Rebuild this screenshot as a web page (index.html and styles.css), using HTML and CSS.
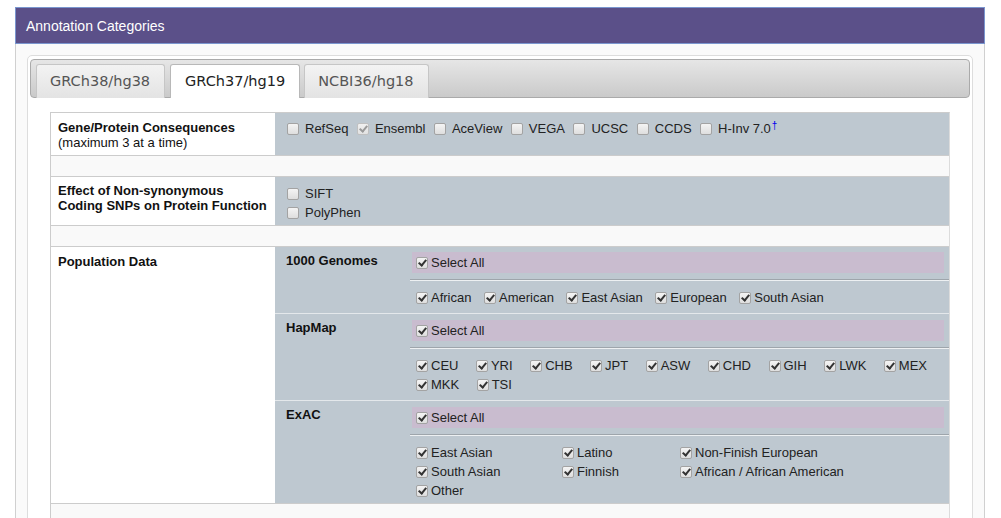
FILE: index.html
```html
<!DOCTYPE html>
<html>
<head>
<meta charset="utf-8">
<link rel="stylesheet" href="styles.css">
</head>
<body>
<div class="panel">
  <div class="panel-head">Annotation Categories</div>
  <div class="panel-body">
    <div class="widget">
      <div class="tabbar">
        <div class="tab">GRCh38/hg38</div>
        <div class="tab active">GRCh37/hg19</div>
        <div class="tab">NCBI36/hg18</div>
      </div>
      <div class="content">
        <div class="grid">
          <div class="row">
            <div class="label"><b>Gene/Protein Consequences</b><br>(maximum 3 at a time)</div>
            <div class="value inline">
              <span class="item"><span class="cb"></span>RefSeq</span>
              <span class="item"><span class="cb checked disabled"></span>Ensembl</span>
              <span class="item"><span class="cb"></span>AceView</span>
              <span class="item"><span class="cb"></span>VEGA</span>
              <span class="item"><span class="cb"></span>UCSC</span>
              <span class="item"><span class="cb"></span>CCDS</span>
              <span class="item"><span class="cb"></span>H-Inv 7.0<sup class="dagger">†</sup></span>
            </div>
          </div>
          <div class="spacer"></div>
          <div class="row">
            <div class="label"><b>Effect of Non-synonymous Coding SNPs on Protein Function</b></div>
            <div class="value stack">
              <span class="item"><span class="cb"></span>SIFT</span>
              <span class="item"><span class="cb"></span>PolyPhen</span>
            </div>
          </div>
          <div class="spacer"></div>
          <div class="row">
            <div class="label"><b>Population Data</b></div>
            <div class="pop">
              <div class="group first">
                <div class="sublabel">1000 Genomes</div>
                <div class="opts">
                  <div class="selectall"><span class="cb checked"></span>Select All</div>
                  <div class="sep"></div>
                  <div class="choices g1k">
                    <span class="item"><span class="cb checked"></span>African</span>
                    <span class="item"><span class="cb checked"></span>American</span>
                    <span class="item"><span class="cb checked"></span>East Asian</span>
                    <span class="item"><span class="cb checked"></span>European</span>
                    <span class="item"><span class="cb checked"></span>South Asian</span>
                  </div>
                </div>
              </div>
              <div class="group">
                <div class="sublabel">HapMap</div>
                <div class="opts">
                  <div class="selectall"><span class="cb checked"></span>Select All</div>
                  <div class="sep"></div>
                  <div class="choices hapmap">
                    <span class="item"><span class="cb checked"></span>CEU</span>
                    <span class="item"><span class="cb checked"></span>YRI</span>
                    <span class="item"><span class="cb checked"></span>CHB</span>
                    <span class="item"><span class="cb checked"></span>JPT</span>
                    <span class="item"><span class="cb checked"></span>ASW</span>
                    <span class="item"><span class="cb checked"></span>CHD</span>
                    <span class="item"><span class="cb checked"></span>GIH</span>
                    <span class="item"><span class="cb checked"></span>LWK</span>
                    <span class="item"><span class="cb checked"></span>MEX</span>
                    <span class="item"><span class="cb checked"></span>MKK</span>
                    <span class="item"><span class="cb checked"></span>TSI</span>
                  </div>
                </div>
              </div>
              <div class="group last">
                <div class="sublabel">ExAC</div>
                <div class="opts">
                  <div class="selectall"><span class="cb checked"></span>Select All</div>
                  <div class="sep"></div>
                  <div class="choices exac">
                    <span class="item"><span class="cb checked"></span>East Asian</span>
                    <span class="item"><span class="cb checked"></span>Latino</span>
                    <span class="item"><span class="cb checked"></span>Non-Finish European</span>
                    <span class="item"><span class="cb checked"></span>South Asian</span>
                    <span class="item"><span class="cb checked"></span>Finnish</span>
                    <span class="item"><span class="cb checked"></span>African / African American</span>
                    <span class="item"><span class="cb checked"></span>Other</span>
                  </div>
                </div>
              </div>
            </div>
          </div>
          <div class="spacer tall"></div>
        </div>
      </div>
    </div>
  </div>
</div>
</body>
</html>
```
FILE: styles.css
```css
html, body {
  margin: 0;
  padding: 0;
  background: #ffffff;
}
body {
  font-family: "Liberation Sans", Arial, sans-serif;
  font-size: 13px;
  color: #222;
  overflow: hidden;
  height: 518px;
}
.panel {
  margin: 7px 0 0 15px;
  width: 970px;
  box-sizing: border-box;
  border-left: 1px solid #d0d0d0;
  border-right: 1px solid #d0d0d0;
  background: #fafafa;
  height: 600px;
}
.panel-head {
  margin: 0 -1px;
  height: 37px;
  box-sizing: border-box;
  background: #5b5089;
  border: 1px solid #7a96cf;
  color: #ffffff;
  font-size: 14px;
  line-height: 36px;
  padding-left: 10px;
}
.panel-body {
  padding: 11px 11px 0 11px;
}
.widget {
  border: 1px solid #dddddd;
  border-radius: 5px;
  background: #ffffff;
  padding: 3px 2px 0 2px;
  height: 560px;
}
.tabbar {
  display: flex;
  height: 39px;
  box-sizing: border-box;
  padding: 4px 0 0 5px;
  border: 1px solid #aaaaaa;
  border-radius: 4px;
  background: linear-gradient(#e6e6e6, #cacaca);
}
.tab {
  height: 34px;
  box-sizing: border-box;
  padding: 0 14px 0 13px;
  margin-right: 4px;
  border: 1px solid #c6c6c6;
  border-bottom: none;
  border-radius: 3px 3px 0 0;
  background: linear-gradient(#f3f3f3, #e3e3e3);
  font-family: "DejaVu Sans", Verdana, sans-serif;
  font-size: 14.5px;
  line-height: 32px;
  color: #555555;
}
.tab:first-child {
  margin-right: 5px;
}
.tab.active {
  background: #ffffff;
  color: #222222;
  border-color: #b8b8b8;
  padding: 0 14px 0 14px;
}
.content {
  padding: 14px 20px 0 20px;
}
.grid {
  border-left: 1px solid #cccccc;
  border-right: 1px solid #dcdcdc;
  border-top: 1px solid #cccccc;
}
.row {
  display: grid;
  grid-template-columns: 224px 1fr;
  border-bottom: 1px solid #cccccc;
}
.label {
  background: #ffffff;
  padding: 7px 8px 5px 7px;
  line-height: 15px;
  color: #111;
}
.row:nth-child(3) .label {
  padding-top: 6px;
}
.row:nth-child(3) .label b {
  display: block;
  width: 210px;
}
.value {
  background: #bec8d0;
  padding: 6px 12px 3px 12px;
  line-height: 19px;
}
.value.inline {
  display: flex;
  flex-wrap: wrap;
  align-items: flex-start;
}
.value.inline .item {
  margin-right: 8.5px;
}
.value.inline .cb,
.value.stack .cb {
  margin-right: 6px;
}
.value.stack {
  display: flex;
  flex-direction: column;
  align-items: flex-start;
  padding-top: 7px;
}
.item {
  display: inline-flex;
  align-items: center;
  white-space: nowrap;
  height: 19px;
}
.dagger {
  color: #0000ee;
  font-size: 10px;
  line-height: 0;
  position: relative;
  top: -3px;
  margin-left: 1px;
}
.spacer {
  height: 20px;
  background: #f9f9f9;
  border-bottom: 1px solid #cccccc;
}
.spacer.tall {
  height: 40px;
  border-bottom: none;
}
.cb {
  display: inline-block;
  position: relative;
  width: 12px;
  height: 12px;
  box-sizing: border-box;
  border: 1px solid #a3a3a3;
  border-radius: 2px;
  background: linear-gradient(#f4f4f4, #dedede);
  margin-right: 3px;
  flex: none;
}
.cb.checked::after {
  content: "";
  position: absolute;
  left: 3px;
  top: 0px;
  width: 3px;
  height: 6px;
  border-right: 2px solid #333;
  border-bottom: 2px solid #333;
  transform: rotate(40deg);
}
.cb.disabled {
  border-color: #c0c0c0;
  background: linear-gradient(#f0f0f0, #e2e2e2);
}
.cb.disabled::after {
  border-color: #9a9a9a;
}
.pop {
  background: #bec8d0;
}
.group {
  display: grid;
  grid-template-columns: 135px 1fr;
  border-top: 1px solid #e4e8eb;
}
.group.first {
  border-top: none;
}
.sublabel {
  padding: 6px 0 0 11px;
  line-height: 15px;
  font-weight: bold;
  color: #111;
}
.opts {
  padding: 6px 0 0 0;
}
.group.first .opts {
  padding-top: 5px;
}
.selectall {
  display: flex;
  align-items: center;
  height: 21px;
  margin: 0 5px 0 2px;
  padding-left: 4px;
  background: #c9bccf;
  box-sizing: border-box;
}
.sep {
  margin-top: 6px;
  height: 1px;
  background: #9ea5ab;
  border-bottom: 1px solid #edf0f2;
}
.choices {
  padding: 7px 0 6px 6px;
  line-height: 19px;
}
.group.last .choices {
  padding-bottom: 3px;
}
.choices.g1k {
  display: flex;
  flex-wrap: wrap;
}
.choices.g1k .item {
  margin-right: 12.5px;
}
.choices.hapmap {
  display: flex;
  flex-wrap: wrap;
}
.choices.hapmap .item {
  margin-right: 17.5px;
}
.choices.exac {
  display: grid;
  grid-template-columns: 146px 118px auto;
}
```
